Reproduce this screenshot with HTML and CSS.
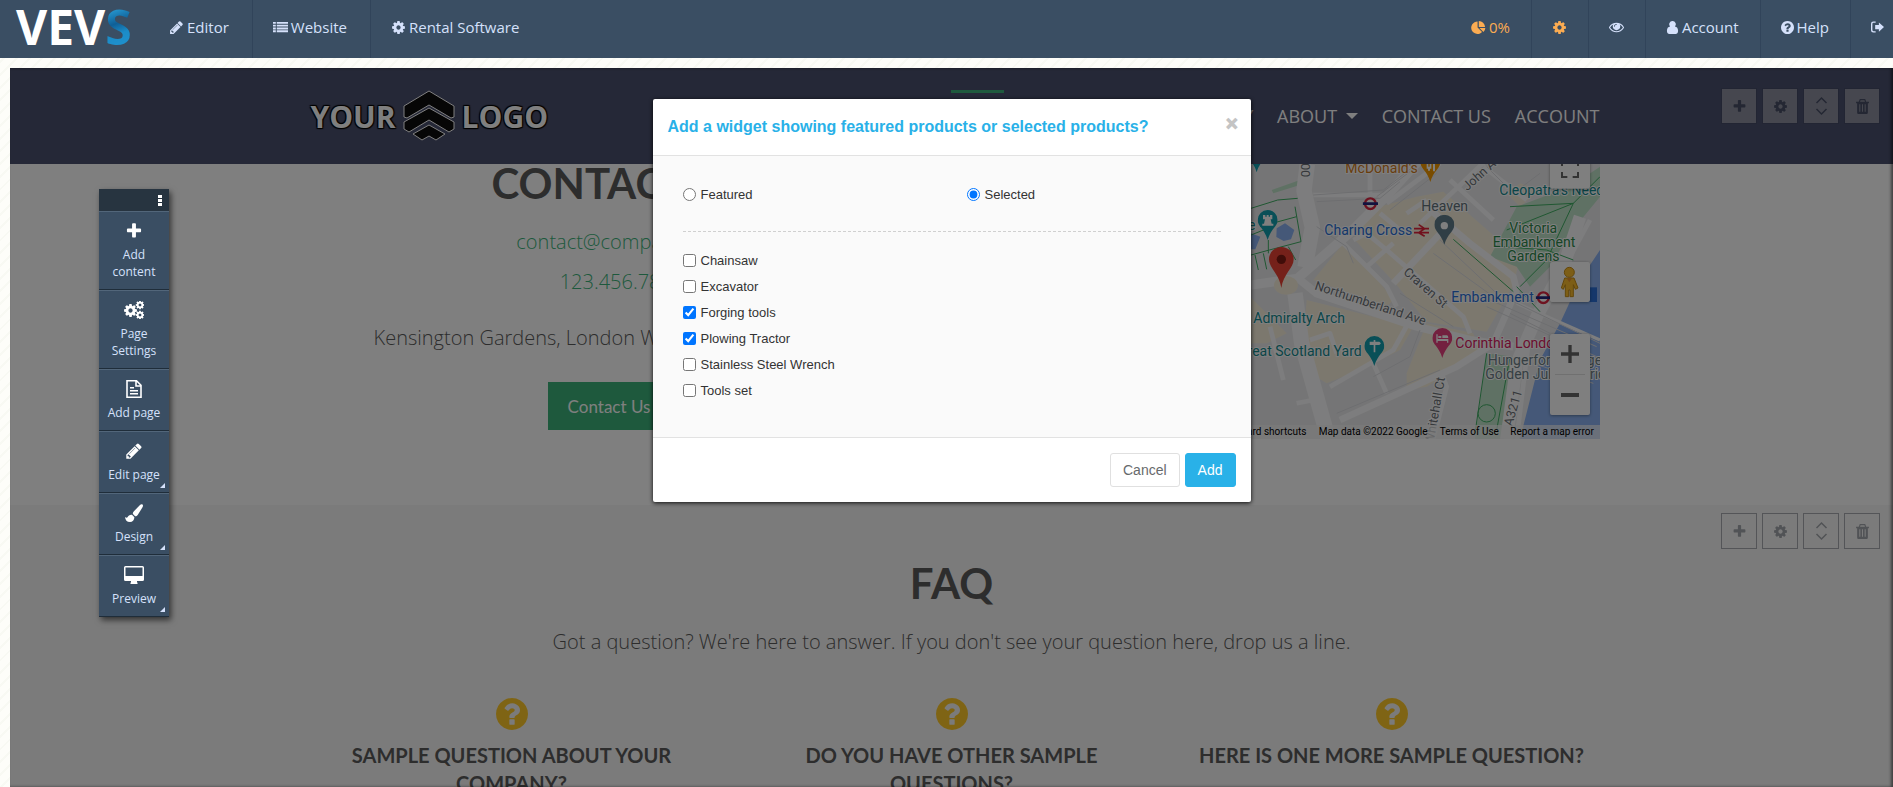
FILE: index.html
```html
<!DOCTYPE html>
<html lang="en">
<head>
    <meta charset="UTF-8">
    <meta name="viewport" content="width=device-width, initial-scale=1.0">
    <title>VEVS Editor</title>
    <link rel="stylesheet" href="styles.css">
</head>
<body>
    <!-- Icon sprite -->
    <svg class="sprite" aria-hidden="true">
        <symbol id="i-pencil" viewBox="0 0 1792 1792"><path d="M491 1536l91-91-235-235-91 91v107h128v128h107zm523-928q0-22-22-22-10 0-17 7l-542 542q-7 7-7 17 0 22 22 22 10 0 17-7l542-542q7-7 7-17zm-54-192l416 416-832 832h-416v-416zm683 96q0 53-37 90l-166 166-416-416 166-165q36-38 90-38 53 0 91 38l235 234q37 39 37 91z"/></symbol>
        <symbol id="i-plus" viewBox="0 0 1792 1792"><path d="M1600 736v192q0 40-28 68t-68 28h-416v416q0 40-28 68t-68 28h-192q-40 0-68-28t-28-68v-416h-416q-40 0-68-28t-28-68v-192q0-40 28-68t68-28h416v-416q0-40 28-68t68-28h192q40 0 68 28t28 68v416h416q40 0 68 28t28 68z"/></symbol>
        <symbol id="i-cog" viewBox="-128 -256 1792 1792"><path d="M1024 640q0-106-75-181t-181-75-181 75-75 181 75 181 181 75 181-75 75-181zm512-109v222q0 12-8 23t-20 13l-185 28q-19 54-39 91 35 50 107 138 10 12 10 25t-9 23q-27 37-99 108t-94 71q-12 0-26-9l-138-108q-44 23-91 38-16 136-29 186-7 28-36 28h-222q-14 0-24.500-8.500t-11.500-21.500l-28-184q-49-16-90-37l-141 107q-10 9-25 9-14 0-25-11-126-114-165-168-7-10-7-23 0-12 8-23 15-21 51-66.500t54-70.500q-27-50-41-99l-183-27q-13-2-21-12.500t-8-23.500v-222q0-12 8-23t19-13l186-28q14-46 39-92-40-57-107-138-10-12-10-24 0-10 9-23 26-36 98.500-107.500t94.500-71.500q13 0 26 10l138 107q44-23 91-38 16-136 29-186 7-28 36-28h222q14 0 24.500 8.500t11.500 21.500l28 184q49 16 90 37l142-107q9-9 24-9 13 0 25 10 129 119 165 170 7 8 7 22 0 12-8 23-15 21-51 66.500t-54 70.500q26 50 41 98l183 28q13 2 21 12.500t8 23.500z"/></symbol>
        <symbol id="i-question" viewBox="128 128 1536 1536"><path d="M1024 1376v-192q0-14-9-23t-23-9h-192q-14 0-23 9t-9 23v192q0 14 9 23t23 9h192q14 0 23-9t9-23zm256-672q0-88-55.500-163t-138.500-116-170-41q-243 0-371 213-15 24 8 42l132 100q7 6 19 6 16 0 25-12 53-68 86-92 34-24 86-24 48 0 85.500 26t37.500 59q0 38-20 61t-68 45q-63 28-115.500 86.500t-52.500 125.500v36q0 14 9 23t23 9h192q14 0 23-9t9-23q0-19 21.500-49.500t54.500-49.500q32-18 49-28.500t46-35 44.500-48 28-60.500 12.500-81zm384 192q0 209-103 385.500t-279.500 279.500-385.500 103-385.500-103-279.500-279.500-103-385.500 103-385.500 279.500-279.500 385.500-103 385.500 103 279.500 279.500 103 385.500z"/></symbol>
        <symbol id="i-eye" viewBox="0 64 1792 1792"><path d="M1664 960q-152-236-381-353 61 104 61 225 0 185-131.500 316.500t-316.500 131.500-316.500-131.500-131.500-316.500q0-121 61-225-229 117-381 353 133 205 333.500 326.500t434.500 121.500 434.500-121.500 333.500-326.500zm-720-384q0-20-14-34t-34-14q-125 0-214.500 89.500t-89.500 214.500q0 20 14 34t34 14 34-14 14-34q0-86 61-147t147-61q20 0 34-14t14-34zm848 384q0 34-20 69-140 230-376.500 368.500t-499.500 138.500-499.500-139-376.500-368q-20-35-20-69t20-69q140-229 376.500-368t499.500-139 499.500 139 376.500 368q20 35 20 69z"/></symbol>
        <symbol id="i-list" viewBox="0 0 16 16"><path d="M0 2h3v2H0zM4 2h12v2H4zM0 5h3v2H0zM4 5h12v2H4zM0 8h3v2H0zM4 8h12v2H4zM0 11h3v2H0zM4 11h12v2H4z"/></symbol>
        <symbol id="i-pie" viewBox="0 0 16 16"><path d="M7 1.500V8l4.800 4.800A6.700 6.700 0 1 1 7 1.500zM8.300 1A6.700 6.700 0 0 1 15 7.400H8.300zM9 8.500h6.300a6.700 6.700 0 0 1-2 4.300z"/></symbol>
        <symbol id="i-user" viewBox="0 0 12 14"><path d="M6 0a3.500 3.500 0 0 1 2.600 5.900C10.800 6.100 12 8 12 10.600 12 13 10.800 14 9.400 14H2.600C1.200 14 0 13 0 10.600 0 8 1.200 6.100 3.400 5.900A3.500 3.500 0 0 1 6 0z"/></symbol>
        <symbol id="i-signout" viewBox="0 0 14 14"><path d="M5 2H2.700A1.200 1.200 0 0 0 1.500 3.200v6.600A1.200 1.200 0 0 0 2.700 11H5v1.500H2.500A2.500 2.500 0 0 1 0 10V3A2.500 2.500 0 0 1 2.500.5H5zM8.500 1.500L14 6.500l-5.500 5V8.800H4.500V4.300h4z"/></symbol>
        <symbol id="i-trash" viewBox="0 0 14 14"><path fill-rule="evenodd" d="M4.500 0h5l1 2.500H13V4h-1v8.500c0 .9-.6 1.500-1.500 1.500h-7C2.600 14 2 13.400 2 12.500V4H1V2.500h2.500zM5.200 1.200l-.5 1.300h4.600l-.5-1.300zM4 5v7h1V5zM6.500 5v7h1V5zM9 5v7h1V5z"/></symbol>
        <symbol id="i-updown" viewBox="0 0 14 20"><path fill="none" stroke="currentColor" stroke-width="1.500" d="M2 7l5-5 5 5M2 13l5 5 5-5"/></symbol>
        <symbol id="i-arrow" viewBox="0 0 17 17"><path fill="none" stroke="currentColor" stroke-width="1.500" d="M2 9h13M10 4l5 5-5 5"/></symbol>
        <symbol id="i-file" viewBox="0 0 16 18"><path fill="none" stroke="currentColor" stroke-width="1.600" d="M1 .8h9.500L15 5.300v11.900H1zM10 1v5h5"/><path d="M4 7h4v1.400H4zM4 10h8v1.400H4zM4 13h8v1.400H4z"/></symbol>
        <symbol id="i-brush" viewBox="0 0 18 18"><path d="M17.500.5c.8.8.5 1.800 0 2.800L12.700 11c-.7 1-1.700 1.500-2.600 1.300L7.900 10c-.2-1 0-1.700.8-2.500L15 .9c.9-.8 1.800-1 2.500-.4zM7 10.800l2.400 2.500C9.200 16.400 7.500 18 5 18c-3.200 0-4.700-2-5-5 1 .8 1.800 1 2.500.3.900-1.700 2.300-2.800 4.500-2.500z"/></symbol>
        <symbol id="i-desktop" viewBox="0 0 20 18"><path fill-rule="evenodd" d="M1.500 0h17A1.500 1.500 0 0 1 20 1.500v12a1.500 1.500 0 0 1-1.500 1.500H13v1.500h.5V18h-7v-1.500H7V15H1.500A1.500 1.500 0 0 1 0 13.500v-12A1.500 1.500 0 0 1 1.500 0zM1.500 1.500V10h17V1.500z"/></symbol>
        <symbol id="i-cogs" viewBox="0 0 20 18">
            <use href="#i-cog" x="-1" y="2" width="15" height="15"/>
            <use href="#i-cog" x="11" y="-1" width="10" height="10"/>
            <use href="#i-cog" x="11" y="9" width="10" height="10"/>
        </symbol>
        <symbol id="i-underground" viewBox="0 0 46 42">
            <circle cx="23" cy="21" r="16" fill="#fff" stroke="#dc2440" stroke-width="7"/>
            <path fill="#26267e" d="M0 17h46v8H0z"/>
        </symbol>
        <symbol id="i-pin" viewBox="0 0 60 90"><path d="M30 0a30 30 0 0 1 30 30c0 20-20 25-30 60C20 55 0 50 0 30A30 30 0 0 1 30 0z"/></symbol>
    </svg>

    <!-- Top bar -->
    <header class="topbar">
        <a href="#" class="brand">VEV<span class="brand-s">S</span></a>
        <nav class="top-left">
            <a href="#"><svg class="icon"><use href="#i-pencil"/></svg>Editor</a>
            <a href="#"><svg class="icon"><use href="#i-list"/></svg>Website</a>
            <a href="#"><svg class="icon"><use href="#i-cog"/></svg>Rental Software</a>
        </nav>
        <nav class="top-right">
            <a href="#" class="orange"><svg class="icon"><use href="#i-pie"/></svg>0%</a>
            <a href="#" class="orange" aria-label="Settings"><svg class="icon"><use href="#i-cog"/></svg></a>
            <a href="#" aria-label="View site"><svg class="icon"><use href="#i-eye"/></svg></a>
            <a href="#"><svg class="icon icon-sm"><use href="#i-user"/></svg>Account</a>
            <a href="#"><svg class="icon icon-sm"><use href="#i-question"/></svg>Help</a>
            <a href="#" aria-label="Log out"><svg class="icon icon-sm"><use href="#i-signout"/></svg></a>
        </nav>
    </header>

    <main class="workspace">
        <div class="site">
            <header class="site-header">
                <div class="container header-row">
                    <a href="#" class="site-logo">YOUR
                        <svg viewBox="0 0 52 52">
                            <path d="M26 1l25 15v11l-3 1-22-13L4 28l-3-1V16z"/>
                            <path d="M26 18l25 14v7l-5 3-20-12L6 42l-5-3v-7z"/>
                            <path d="M26 35l16 9-9 6-7-4-7 4-9-6z"/>
                        </svg>
                        LOGO</a>
                    <nav class="site-nav">
                        <a href="#" class="active">HOME</a>
                        <a href="#">EQUIPMENT</a>
                        <a href="#">INVENTORY</a>
                        <a href="#">ABOUT <span class="caret"></span></a>
                        <a href="#">CONTACT US</a>
                        <a href="#">ACCOUNT</a>
                    </nav>
                </div>
                <div class="tools tools-dark">
                    <button aria-label="Add"><svg><use href="#i-plus"/></svg></button>
                    <button aria-label="Settings"><svg><use href="#i-cog"/></svg></button>
                    <button aria-label="Move"><svg class="tall"><use href="#i-updown"/></svg></button>
                    <button aria-label="Delete"><svg><use href="#i-trash"/></svg></button>
                </div>
            </header>

            <section class="contact">
                <div class="container contact-row">
                    <div class="contact-info">
                        <h2>CONTACT US</h2>
                        <p class="links"><a href="#">contact@company.com</a><a href="#">123.456.7890</a></p>
                        <p class="address">Kensington Gardens, London W2 2UH, United Kingdom</p>
                        <a href="#" class="btn-contact">Contact Us<svg><use href="#i-arrow"/></svg></a>
                    </div>
                    <div class="map">
                        <svg viewBox="-774 252 1914 825" preserveAspectRatio="xMaxYMin slice">
                            <path fill="#ebebed" d="M-774 252h1914v825H-774z"/>
                            <!-- beige blocks -->
                            <g fill="#f9f1dd">
                                <path d="M590 350l80-15 230 200-20 80-80 140-180-30-90-110-130-140 60-90z"/>
                                <path d="M370 490l80 80 70 90-20 20-220-80z"/>
                                <path d="M260 660l320 80-40 70-120 60-100 40-50-30-20-110z"/>
                                <path d="M560 880l60-150 140 30 20 60-160 100-60 10z"/>
                                <path d="M90 650l60 60 50 50-60 30H90z"/>
                                <path d="M860 340l40-30 60 20-60 50z"/>
                            </g>
                            <!-- parks and river -->
                            <path fill="#bfe3c8" d="M890 380l160-60 90-60v90l-90 110-60 100-60 60-40-60-80-30zM800 820l80 10-20 130-20 117h-75zM155 330l85-30v15l-80 25z"/>
                            <path fill="#8ab1f0" d="M1140 510l-60 90-60 130-60 110-60 237h240zM170 445l25-15 28 20-10 28-22 5-22-12zM93 460l28 10-15 38H93z"/>
                            <!-- roads -->
                            <g fill="none" stroke="#fbfbfc" stroke-linejoin="round">
                                <path stroke-width="46" d="M262 252l-10 80 25 110-22 120M225 640l20 150 80 287"/>
                                <path stroke-width="28" d="M93 615l70-10 70-10 160-140 110-110 100-110"/>
                                <path stroke-width="24" d="M240 600l50 40 300 100 160 40 130 20"/>
                                <path stroke-width="20" d="M620 380l130 110 130 100 10 40-70 160-110 70-350 160M690 430l-170 180"/>
                                <path stroke-width="14" d="M370 490l130 130 30 60M400 480l40-20 60 50 230 200 20 50M440 560l80-70M270 780l60-20 20 60M330 920l190-110 50-90M460 850l40 90M230 970l50-10M665 880l15 40-40 157M150 740l40 160M480 400l60 50M500 370l160-120M560 400l60-40M600 430l220-210M690 300l130 120M790 260l130 100M450 252v90M280 345h220M1110 420l-180 330-40 327"/>
                                <path stroke-width="38" d="M1080 410l-50 150-80 150-60 140-30 227"/>
                                <path stroke-width="10" d="M890 670l250 110"/>
                            </g>
                            <g fill="none" stroke="#dcdde1" stroke-width="3">
                                <path d="M280 345l210-15 100-78M290 365l190-10 60-50M640 520l180 130M660 480l180 170M290 440l90 60 20 50M540 640l160 100M800 680l330 150M810 660l320 140M850 650l290 140M600 750l-30 80-110 60"/>
                                <path d="M940 850l180 60M870 700l120 60M470 350l120-90M510 390l140-110M350 1000l310-130M800 260l80 80 80-60"/>
                            </g>
                            <g fill="none" stroke="#3fae63" stroke-width="3">
                                <path d="M93 385l80-25 60-5M93 465l50-20M120 440l110-30M225 380l18 105-95 25-55 15M145 480v40M105 525l10 45M130 520l10 48M205 500l22 40"/>
                                <path d="M700 478l180 157M890 620l70 75M1140 290l-80 80-200 80M1060 370l-80 170-80 80M850 500l130 10 80 30M1060 370l-190 10M765 1060l35-240M830 1050l40-220"/>
                                <circle cx="800" cy="1000" r="26"/>
                            </g>
                            <ellipse cx="198" cy="616" rx="36" ry="28" fill="#f9f1dd"/>

                            <!-- pins -->
                            <use href="#i-pin" x="80" y="187" width="60" height="90" fill="#129eaf"/>
                            <use href="#i-pin" x="601" y="216" width="60" height="90" fill="#f29900"/>
                            <path fill="#fff" d="M620 250h5v10h4v-10h5v16h-4v6h-6v-6h-4zM639 250h6v24h-6z"/>
                            <use href="#i-pin" x="113" y="390" width="60" height="90" fill="#129eaf"/>
                            <path fill="#fff" d="M129 405h7v5h4v-5h6v5h4v-5h7v13h-5l3 13h5v6h-33v-6h5l3-13h-6z"/>
                            <use href="#i-pin" x="643" y="404" width="60" height="90" fill="#607d8b"/>
                            <circle cx="673" cy="437" r="11" fill="#fff"/>
                            <use href="#i-pin" x="433" y="768" width="60" height="90" fill="#129eaf"/>
                            <path fill="#fff" d="M461 780h5v5h12l5 5-5 5h-12v22h-5v-22h-12v-10h12z"/>
                            <use href="#i-pin" x="637" y="744" width="60" height="90" fill="#e7417f"/>
                            <path fill="#fff" d="M649 763h4v14h32v11h-4v-5h-28v5h-4zM655 768h9v6h-9zM667 766h14q4 1 4 8h-18z"/>
                            <path fill="#ea4335" d="M184 501a37 37 0 0 1 37 37c0 26-31 44-37 86-6-42-37-60-37-86a37 37 0 0 1 37-37z"/>
                            <circle cx="184" cy="538" r="14" fill="#811a12"/>
                            <use href="#i-underground" x="428" y="350" width="46" height="42"/>
                            <use href="#i-underground" x="947" y="632" width="46" height="42"/>
                            <path fill="none" stroke="#e2233a" stroke-width="5" d="M582 446h45M582 458h45M596 434l18 12-18 12 18 11"/>

                            <!-- labels -->
                            <g class="map-labels">
                                <text x="376" y="280" fill="#d27a1a">McDonald's</text>
                                <text x="604" y="393" fill="#62727b">Heaven</text>
                                <text x="313" y="465" fill="#2a6fd6">Charing Cross</text>
                                <text x="838" y="345" fill="#148a8f">Cleopatra's Needle</text>
                                <text x="868" y="459" fill="#2c8a4b">Victoria</text>
                                <text x="818" y="501" fill="#2c8a4b">Embankment</text>
                                <text x="862" y="543" fill="#2c8a4b">Gardens</text>
                                <text x="694" y="666" fill="#2a6fd6">Embankment</text>
                                <text x="100" y="729" fill="#148a8f">Admiralty Arch</text>
                                <text x="425" y="828" text-anchor="end" fill="#148a8f">Great Scotland Yard</text>
                                <text x="706" y="804" fill="#d81b60">Corinthia London</text>
                                <text x="803" y="855" fill="#6d7f87">Hungerford Bridge</text>
                                <text x="796" y="897" fill="#6d7f87">Golden Jubilee Bridge</text>
                                <text x="106" y="450" text-anchor="end" fill="#148a8f">Square</text>
                            </g>
                            <g class="map-labels map-streets">
                                <text transform="translate(282 628) rotate(18)">Northumberland Ave</text>
                                <text transform="translate(548 580) rotate(41)">Craven St</text>
                                <text transform="translate(742 334) rotate(-42)">John Adam St</text>
                                <text transform="translate(270 292) rotate(-90)">00</text>
                                <text transform="translate(640 1094) rotate(-80)">Whitehall Ct</text>
                                <text transform="translate(876 1040) rotate(-74)">A3211</text>
                            </g>

                            <!-- map controls -->
                            <path fill="#2a6fd6" d="M1105 622h26v44h-26z"/>
                            <g class="map-control">
                                <rect x="990" y="206" width="120" height="120" rx="6"/>
                                <rect x="990" y="546" width="120" height="120" rx="6"/>
                                <rect x="990" y="762" width="120" height="243" rx="6"/>
                            </g>
                            <path fill="none" stroke="#666" stroke-width="6" d="M1026 276v15h16M1074 276v15h-16M1026 258v-10M1074 258v-10"/>
                            <path fill="#666" d="M1023 817h22v-22h10v22h22v10h-22v22h-10v-22h-22zM1023 939h54v12h-54z"/>
                            <path fill="#e0e0e0" d="M1005 882h90v3h-90z"/>
                            <circle cx="1048" cy="577" r="15" fill="#fbbc2d" stroke="#c68e16" stroke-width="3"/>
                            <path fill="#fbbc2d" stroke="#c68e16" stroke-width="3" d="M1034 594h28l12 30-8 4-6-14v36h-10v-20h-4v20h-10v-36l-6 14-6-4z"/>
                            <path fill="#e8912d" d="M1040 595h16l-8 12z"/>

                            <path fill="#f5f5f5" fill-opacity=".7" d="M-200 1035h1340v42H-200z"/>
                            <g class="map-terms">
                                <text x="259" y="1065" text-anchor="end">Keyboard shortcuts</text>
                                <text x="296" y="1065">Map data ©2022 Google</text>
                                <text x="659" y="1065">Terms of Use</text>
                                <text x="871" y="1065">Report a map error</text>
                            </g>
                        </svg>
                    </div>
                </div>
            </section>

            <section class="faq">
                <div class="tools">
                    <button aria-label="Add"><svg><use href="#i-plus"/></svg></button>
                    <button aria-label="Settings"><svg><use href="#i-cog"/></svg></button>
                    <button aria-label="Move"><svg class="tall"><use href="#i-updown"/></svg></button>
                    <button aria-label="Delete"><svg><use href="#i-trash"/></svg></button>
                </div>
                <div class="container">
                    <h2>FAQ</h2>
                    <p>Got a question? We're here to answer. If you don't see your question here, drop us a line.</p>
                    <div class="faq-row">
                        <div class="faq-item"><svg><use href="#i-question"/></svg><h3>SAMPLE QUESTION ABOUT YOUR COMPANY?</h3></div>
                        <div class="faq-item"><svg><use href="#i-question"/></svg><h3>DO YOU HAVE OTHER SAMPLE QUESTIONS?</h3></div>
                        <div class="faq-item"><svg><use href="#i-question"/></svg><h3>HERE IS ONE MORE SAMPLE QUESTION?</h3></div>
                    </div>
                </div>
            </section>
        </div>

        <!-- Modal -->
        <div class="overlay">
            <form class="modal" role="dialog" aria-labelledby="modal-title">
                <div class="modal-header">
                    <h4 id="modal-title">Add a widget showing featured products or selected products?</h4>
                    <button type="button" class="close" aria-label="Close">&times;</button>
                </div>
                <div class="modal-body">
                    <div class="radios">
                        <label><input type="radio" name="type" value="featured">Featured</label>
                        <label><input type="radio" name="type" value="selected" checked>Selected</label>
                    </div>
                    <div class="products">
                        <label><input type="checkbox">Chainsaw</label>
                        <label><input type="checkbox">Excavator</label>
                        <label><input type="checkbox" checked>Forging tools</label>
                        <label><input type="checkbox" checked>Plowing Tractor</label>
                        <label><input type="checkbox">Stainless Steel Wrench</label>
                        <label><input type="checkbox">Tools set</label>
                    </div>
                </div>
                <div class="modal-footer">
                    <button type="button" class="btn">Cancel</button>
                    <button type="button" class="btn btn-primary">Add</button>
                </div>
            </form>
        </div>

        <!-- Floating editor palette -->
        <aside class="palette">
            <div class="palette-handle"><i></i><i></i><i></i></div>
            <a href="#"><svg><use href="#i-plus"/></svg>Add content</a>
            <a href="#"><svg><use href="#i-cogs"/></svg>Page Settings</a>
            <a href="#"><svg><use href="#i-file"/></svg>Add page</a>
            <a href="#" class="more"><svg><use href="#i-pencil"/></svg>Edit page</a>
            <a href="#" class="more"><svg><use href="#i-brush"/></svg>Design</a>
            <a href="#" class="more"><svg><use href="#i-desktop"/></svg>Preview</a>
        </aside>
    </main>
</body>
</html>
```
FILE: styles.css
```css
* {
    box-sizing: border-box;
}
body {
    margin: 0;
    height: 100vh;
    display: flex;
    flex-direction: column;
    overflow: hidden;
    font-family: "Open Sans", "Noto Sans", sans-serif;
    background: repeating-linear-gradient(135deg, #fdfdf9 0 7px, #f8f9f3 7px 9px);
}
a {
    color: inherit;
    text-decoration: none;
}
h2, h3, h4, p {
    margin: 0;
}
svg {
    fill: currentColor;
}
.sprite {
    position: absolute;
    width: 0;
    height: 0;
}

/* Top bar */
.topbar {
    flex: none;
    display: flex;
    height: 58px;
    background-color: #3a4e63;
    color: #d5e1fb;
    font-size: 15px;
}
.brand {
    width: 149px;
    padding-left: 16px;
    font-size: 48px;
    font-weight: 700;
    line-height: 54px;
    color: #fff;
}
.brand-s {
    background: linear-gradient(160deg, #2ba3dc 20%, #0f5f96 45%, #1b8cc8 60%, #2497d3);
    -webkit-background-clip: text;
    background-clip: text;
    color: transparent;
}
.top-left, .top-right {
    display: flex;
}
.top-right {
    margin-left: auto;
}
.topbar nav a {
    display: flex;
    align-items: center;
    gap: 3px;
    padding: 0 23px 4px 20px;
    border-right: 1px solid #31445a;
}
.topbar .top-right a {
    padding-right: 21px;
}
.topbar nav a:last-child {
    border-right: none;
}
.topbar .top-right a:last-child {
    padding-right: 9px;
}
.icon {
    width: 15px;
    height: 15px;
}
.icon-sm {
    width: 13px;
    height: 13px;
}
.orange {
    color: #fbac52;
}

/* Site preview */
.workspace {
    position: relative;
    flex: 1;
    min-height: 0;
    margin: 10px 0 0 10px;
}
.site {
    height: 100%;
    overflow: hidden;
    background-color: #fff;
    color: #5a5a5a;
}
.container {
    max-width: 1320px;
    margin: 0 auto;
    padding: 0 12px;
}
.site-header {
    position: relative;
    height: 96px;
    background-color: #4b506e;
    color: #fff;
}
.header-row {
    display: flex;
    justify-content: space-between;
}
.site-logo {
    display: flex;
    align-items: center;
    height: 96px;
    padding-left: 7px;
    gap: 7px;
    font-size: 30px;
    font-weight: 700;
    text-shadow: 1px 1px 1px #000, -1px -1px 1px #000, 1px -1px 1px #000, -1px 1px 1px #000;
}
.site-logo svg {
    width: 52px;
    height: 52px;
    fill: #0c0c0c;
    stroke: #fff;
}
.site-nav {
    display: flex;
    gap: 24px;
    padding-top: 22px;
    font-size: 18px;
    line-height: 46px;
}
.site-nav a {
    border-top: 3px solid transparent;
}
.site-nav .active {
    border-color: #3cb37a;
}
.caret {
    display: inline-block;
    margin-left: 4px;
    border: 6px solid transparent;
    border-top-color: #fff;
    border-bottom: 0;
    vertical-align: 4px;
}
.tools {
    position: absolute;
    top: 8px;
    right: 13px;
    display: flex;
    gap: 5px;
}
.tools button {
    display: flex;
    align-items: center;
    justify-content: center;
    width: 36px;
    height: 36px;
    padding: 0;
    border: 1px solid #a8abb0;
    background: none;
    color: #a3a6ac;
}
.tools svg {
    width: 15px;
    height: 15px;
}
.tools .tall {
    height: 20px;
}
.tools-dark {
    top: 20px;
}
.tools-dark button {
    border-color: #454a66;
    background-color: #8c8f9e;
    color: #484e66;
}

.contact {
    height: 341px;
}
.contact-row {
    display: grid;
    grid-template-columns: 1fr 1fr;
    gap: 24px;
}
.contact-info {
    text-align: center;
    font-size: 20px;
    font-weight: 300;
}
h2 {
    font-family: Lato, sans-serif;
    font-size: 42px;
    font-weight: 700;
    line-height: 46px;
    text-align: center;
}
.contact h2 {
    line-height: 38px;
}
.links {
    margin: 20px 0 21px;
    line-height: 40px;
    color: #3cb37a;
}
.links a {
    display: block;
}
.address {
    line-height: 30px;
    white-space: nowrap;
}
.btn-contact {
    display: inline-flex;
    align-items: center;
    gap: 8px;
    height: 48px;
    margin-top: 29px;
    padding: 0 20px;
    background-color: #3cb37a;
    color: #fff;
    font-family: Lato, sans-serif;
    font-size: 17px;
    font-weight: 400;
}
.btn-contact svg {
    width: 17px;
    height: 17px;
}
.map {
    height: 275px;
}
.map svg {
    display: block;
    width: 100%;
    height: 100%;
}
.map-labels {
    font-family: Roboto, sans-serif;
    font-size: 42px;
    stroke: #fff;
    stroke-width: 6px;
    stroke-linejoin: round;
    paint-order: stroke;
}
.map-streets {
    font-size: 38px;
    fill: #6c7176;
}
.map-control {
    fill: #fff;
    filter: drop-shadow(0 2px 4px rgba(0, 0, 0, 0.4));
}
.map-terms {
    font-family: Roboto, sans-serif;
    font-size: 30px;
    fill: #000;
}

.faq {
    position: relative;
    height: 400px;
    padding-top: 55px;
    background-color: #f6f6f6;
}
.faq p {
    margin: 21px 0 41px;
    font-size: 20px;
    font-weight: 300;
    line-height: 30px;
    text-align: center;
}
.faq-row {
    display: grid;
    grid-template-columns: repeat(3, 1fr);
    margin: 0 -12px;
}
.faq-item {
    padding: 0 24px;
    text-align: center;
}
.faq-item svg {
    display: block;
    width: 32px;
    height: 32px;
    margin: 0 auto 11px;
    color: #ffc928;
}
.faq-item h3 {
    font-family: Lato, sans-serif;
    font-size: 20px;
    font-weight: 700;
    line-height: 28px;
}

/* Modal */
.overlay {
    position: absolute;
    inset: 0;
    display: flex;
    justify-content: center;
    align-items: flex-start;
    padding-top: 31px;
    background-color: rgba(0, 0, 0, 0.5);
    box-shadow: inset -2px 0 3px rgba(0, 0, 0, 0.5);
}
.modal {
    width: 598px;
    border-radius: 2px;
    background-color: #fff;
    box-shadow: 0 1px 4px rgba(0, 0, 0, 0.9);
    font-family: "Liberation Sans", Arial, sans-serif;
    font-size: 13px;
    color: #333;
}
.modal-header {
    display: flex;
    justify-content: space-between;
    height: 56px;
    padding: 0 11px 0 15px;
}
.modal-header h4 {
    font-size: 16px;
    line-height: 56px;
    color: #29b1e8;
}
.close {
    height: 48px;
    padding: 0;
    border: none;
    background: none;
    font-family: "Open Sans", sans-serif;
    font-size: 26px;
    font-weight: 800;
    color: #c4c4c4;
    cursor: pointer;
}
.modal-body {
    padding: 30px 30px 33px;
    border-top: 1px solid #e2e2e2;
    border-bottom: 1px solid #e2e2e2;
    background-color: #fafafa;
}
.modal-body label {
    display: flex;
    align-items: center;
}
.modal-body input {
    width: 13px;
    height: 13px;
    margin: 0 5px 1px 0;
    accent-color: #0075ff;
}
.radios {
    display: grid;
    grid-template-columns: 1fr 1fr;
    gap: 30px;
    height: 46px;
    line-height: 18px;
    align-items: start;
    border-bottom: 1px dashed #d0d0d0;
}
.products {
    padding-top: 16px;
    line-height: 26px;
}
.modal-footer {
    display: flex;
    justify-content: flex-end;
    gap: 5px;
    padding: 15px;
}
.btn {
    height: 34px;
    padding: 0 12px;
    border: 1px solid #e0e0e0;
    border-radius: 3px;
    background-color: #fff;
    font-family: inherit;
    font-size: 14px;
    color: #676a6c;
    cursor: pointer;
}
.btn-primary {
    border-color: #29b1e8;
    background-color: #29b1e8;
    color: #fff;
}

/* Floating palette */
.palette {
    position: absolute;
    top: 121px;
    left: 89px;
    width: 70px;
    background-color: #3a4e63;
    box-shadow: 2px 3px 6px rgba(0, 0, 0, 0.6);
    color: #d5e1fb;
    font-size: 12px;
    line-height: 17px;
    text-align: center;
}
.palette-handle {
    display: flex;
    flex-direction: column;
    align-items: flex-end;
    gap: 1px;
    height: 22px;
    padding: 6px 7px 0 0;
    background-color: #273440;
}
.palette-handle i {
    width: 4px;
    height: 3px;
    background-color: #fff;
}
.palette a {
    position: relative;
    display: block;
    padding: 10px 8px 9px;
    border-top: 1px solid #52667a;
    border-bottom: 1px solid #1f2d3a;
}
.palette svg {
    display: block;
    width: 20px;
    height: 18px;
    margin: 0 auto 6px;
    color: #fff;
}
.palette .more::after {
    content: "";
    position: absolute;
    right: 4px;
    bottom: 4px;
    border-left: 5px solid transparent;
    border-bottom: 5px solid #d5e1fb;
}
```
